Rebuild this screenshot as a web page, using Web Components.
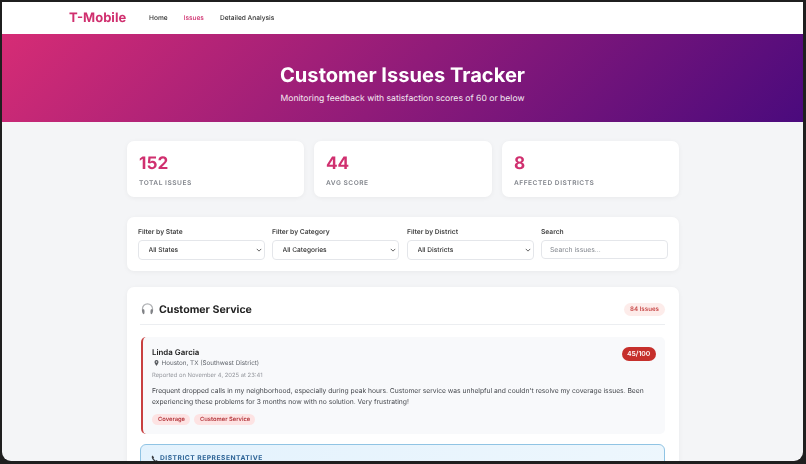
<!DOCTYPE html>
<html lang="en">
<head>
<meta charset="utf-8">
<title>Customer Issues Tracker</title>
<style>
    html, body { margin: 0; height: 100%; overflow: hidden; background: #1f1f1f; }
    body { font-family: Inter, "Liberation Sans", sans-serif; text-rendering: geometricPrecision; }
</style>
</head>
<body>
<app-window>
    <top-nav></top-nav>
    <hero-banner heading="Customer Issues Tracker" sub="Monitoring feedback with satisfaction scores of 60 or below"></hero-banner>
    <page-main>
        <stat-row>
            <stat-card value="152" label="Total Issues"></stat-card>
            <stat-card value="44" label="Avg Score"></stat-card>
            <stat-card value="8" label="Affected Districts"></stat-card>
        </stat-row>
        <filter-bar>
            <filter-field label="Filter by State" option="All States"></filter-field>
            <filter-field label="Filter by Category" option="All Categories"></filter-field>
            <filter-field label="Filter by District" option="All Districts"></filter-field>
            <filter-field label="Search" placeholder="Search issues..."></filter-field>
        </filter-bar>
        <issue-section heading="Customer Service" count="84 Issues">
            <issue-card name="Linda Garcia" place="Houston, TX (Southwest District)" date="Reported on November 4, 2025 at 23:41" score="45/100">
                Frequent dropped calls in my neighborhood, especially during peak hours. Customer service was unhelpful and couldn't resolve my coverage issues. Been experiencing these problems for 3 months now with no solution. Very frustrating!
                <tag-chip slot="tags">Coverage</tag-chip>
                <tag-chip slot="tags">Customer Service</tag-chip>
            </issue-card>
            <rep-panel heading="District Representative"></rep-panel>
        </issue-section>
    </page-main>
</app-window>

<script>
    function define(name, render) {
        customElements.define(name, class extends HTMLElement {
            connectedCallback() {
                this.attachShadow({ mode: 'open' });
                this.shadowRoot.innerHTML = render(this);
            }
        });
    }

    define('app-window', () => `
        <style>
            :host {
                display: block;
                box-sizing: border-box;
                height: 459px;
                margin: 2px 3px 0 2px;
                background: #f4f5f7;
                border-radius: 0 0 9px 9px;
                overflow: hidden;
                filter: blur(.35px);
            }
        </style>
        <slot></slot>
    `);

    define('top-nav', () => `
        <style>
            :host {
                display: flex;
                align-items: center;
                height: 32px;
                padding-left: 67px;
                background: #fff;
                font-size: 6.6px;
                font-weight: 500;
                color: #333;
            }
            .logo {
                width: 80px;
                color: #d0306f;
                font-size: 13px;
                font-weight: 700;
                will-change: transform;
            }
            nav { display: flex; gap: 16px; will-change: transform; }
            .active { color: #d0306f; }
        </style>
        <div class="logo">T-Mobile</div>
        <nav>
            <span>Home</span>
            <span class="active">Issues</span>
            <span>Detailed Analysis</span>
        </nav>
    `);

    define('hero-banner', (el) => `
        <style>
            :host {
                display: flex;
                flex-direction: column;
                align-items: center;
                justify-content: center;
                box-sizing: border-box;
                height: 88px;
                padding-top: 10px;
                background: linear-gradient(135deg, #d62c75 0%, #4a0a7d 100%);
                color: #fff;
                text-align: center;
            }
            h1 { margin: 0 0 5px; font-size: 20.1px; line-height: 26px; font-weight: 700; will-change: transform; }
            p { margin: 0; font-size: 8.6px; line-height: 12px; opacity: .9; }
        </style>
        <h1>${el.getAttribute('heading')}</h1>
        <p>${el.getAttribute('sub')}</p>
    `);

    define('page-main', () => `
        <style>
            :host {
                display: flex;
                flex-direction: column;
                width: 552px;
                margin-left: 125px;
                padding-top: 19px;
            }
        </style>
        <slot></slot>
    `);

    define('stat-row', () => `
        <style>
            :host {
                display: grid;
                grid-template-columns: repeat(3, 1fr);
                gap: 10px;
                margin-bottom: 20px;
            }
        </style>
        <slot></slot>
    `);

    define('stat-card', (el) => `
        <style>
            :host {
                display: block;
                box-sizing: border-box;
                height: 56px;
                padding: 12px 12px 0;
                background: #fff;
                border-radius: 7px;
                box-shadow: 0 1px 5px rgba(0, 0, 0, .05);
            }
            .value { color: #d0306f; font-size: 17.2px; line-height: 21px; font-weight: 700; will-change: transform; }
            .label {
                margin-top: 4px;
                color: #80848b;
                font-size: 6.6px;
                line-height: 10px;
                font-weight: 600;
                letter-spacing: .52px;
                text-transform: uppercase;
                will-change: transform;
            }
        </style>
        <div class="value">${el.getAttribute('value')}</div>
        <div class="label">${el.getAttribute('label')}</div>
    `);

    define('filter-bar', () => `
        <style>
            :host {
                display: grid;
                grid-template-columns: repeat(4, 1fr);
                gap: 7.67px;
                box-sizing: border-box;
                height: 54px;
                margin-bottom: 16px;
                padding: 11px;
                background: #fff;
                border-radius: 7px;
                box-shadow: 0 1px 5px rgba(0, 0, 0, .05);
            }
        </style>
        <slot></slot>
    `);

    define('filter-field', (el) => {
        const placeholder = el.getAttribute('placeholder');
        const control = placeholder
            ? `<input type="text" placeholder="${placeholder}">`
            : `<div class="wrap">
                    <select><option>${el.getAttribute('option')}</option></select>
                    <svg viewBox="0 0 8 5"><path d="M1 1l3 3 3-3" fill="none" stroke="#444" stroke-width="1.100"/></svg>
               </div>`;
        return `
            <style>
                :host { display: block; min-width: 0; }
                label {
                    display: block;
                    margin-bottom: 3px;
                    color: #444;
                    font-size: 6.7px;
                    line-height: 8.500px;
                    font-weight: 600;
                    will-change: transform;
                }
                .wrap { position: relative; }
                .wrap svg { position: absolute; right: 3px; top: 8px; width: 6px; height: 4px; pointer-events: none; }
                select, input {
                    display: block;
                    box-sizing: border-box;
                    width: 100%;
                    border: 1px solid #e4e6ea;
                    border-radius: 4px;
                    background: transparent;
                    font: 500 6.6px Inter, "Liberation Sans", sans-serif;
                    text-rendering: geometricPrecision;
                    color: #333;
                    outline: none;
                    will-change: transform;
                }
                select { height: 20px; padding: 0 9.500px; appearance: none; }
                input { height: 19px; padding: 0 8px; font-weight: 400; font-size: 6.8px; }
                input::placeholder { color: #84888f; }
            </style>
            <label>${el.getAttribute('label')}</label>
            ${control}
        `;
    });

    define('issue-section', (el) => `
        <style>
            :host {
                display: block;
                padding: 13px 14px 13px 13px;
                background: #fff;
                border-radius: 7px;
                box-shadow: 0 1px 5px rgba(0, 0, 0, .05);
            }
            header {
                display: flex;
                align-items: center;
                gap: 5px;
                height: 18px;
                margin-bottom: 12px;
                padding: 0 0 6px 1px;
                border-bottom: 1px solid #eceef1;
            }
            svg { width: 13px; height: 14px; flex: none; }
            h2 { flex: 1; margin: 0; color: #222; font-size: 10.6px; font-weight: 700; will-change: transform; }
            .count {
                padding: 0 6px;
                border-radius: 7px;
                background: #fdecea;
                color: #c84a4a;
                font-size: 6.2px;
                line-height: 13px;
                font-weight: 600;
            }
            .count span { display: block; will-change: transform; }
        </style>
        <header>
            <svg viewBox="0 0 14 14">
                <path d="M1.600 9V6.800a5.400 5.400 0 0 1 10.800 0V9" fill="none" stroke="#b0b2b5" stroke-width="1.300"/>
                <path d="M1 8.300c0-1 1.900-1.500 2.400-.8.600.9.600 4 0 4.900C2.700 13 1 11.400 1 8.300zM13 8.300c0-1-1.900-1.500-2.400-.8-.6.9-.6 4 0 4.900.7.600 2.400-1 2.400-4.100z" fill="#808286"/>
            </svg>
            <h2>${el.getAttribute('heading')}</h2>
            <div class="count"><span>${el.getAttribute('count')}</span></div>
        </header>
        <slot></slot>
    `);

    define('issue-card', (el) => `
        <style>
            :host {
                display: block;
                position: relative;
                box-sizing: border-box;
                height: 97px;
                margin: 0 0 10px 1px;
                padding: 10px 9px 0 9px;
                border-left: 2px solid #c84040;
                border-radius: 5px;
                background: #f8f9fb;
            }
            .name { color: #222; font-size: 7.9px; line-height: 10px; font-weight: 600; will-change: transform; }
            .place {
                display: flex;
                align-items: center;
                gap: 3px;
                height: 10px;
                margin-top: .5px;
                color: #63676e;
                font-size: 6.3px;
                will-change: transform;
            }
            .place svg { width: 5px; height: 6px; margin-left: 1.5px; margin-right: 0; }
            .date { margin-top: 4.500px; color: #94979d; font-size: 5.85px; line-height: 8px; will-change: transform; }
            .text { margin-top: 5.500px; color: #44474c; font-size: 6.72px; line-height: 10.500px; will-change: transform; }
            .tags { display: flex; gap: 4px; margin-top: 7px; }
            .score {
                position: absolute;
                top: 10px;
                right: 9px;
                padding: 0 5.500px;
                border-radius: 7px;
                background: #c6302c;
                color: #fff;
                font-size: 6.8px;
                line-height: 14px;
                font-weight: 600;
            }
            .score span { display: block; will-change: transform; }
        </style>
        <div class="name">${el.getAttribute('name')}</div>
        <div class="place">
            <svg viewBox="0 0 6 7"><path d="M3 0a2.400 2.400 0 0 0-2.400 2.400C.6 4 3 7 3 7s2.400-3 2.400-4.600A2.400 2.400 0 0 0 3 0zm0 3.300a.9.9 0 1 1 0-1.800.9.9 0 0 1 0 1.800z" fill="#55585d"/></svg>
            <span>${el.getAttribute('place')}</span>
        </div>
        <div class="date">${el.getAttribute('date')}</div>
        <div class="text"><slot></slot></div>
        <div class="tags"><slot name="tags"></slot></div>
        <div class="score"><span>${el.getAttribute('score')}</span></div>
    `);

    define('tag-chip', () => `
        <style>
            :host {
                display: inline-block;
                padding: 0 5.500px;
                border-radius: 6px;
                background: #fde3e3;
                color: #b3343a;
                font-size: 5.8px;
                line-height: 11px;
                font-weight: 600;
            }
            span { display: block; will-change: transform; }
        </style>
        <span><slot></slot></span>
    `);

    define('rep-panel', (el) => `
        <style>
            :host {
                display: block;
                box-sizing: border-box;
                height: 60px;
                padding: 9px 10px;
                border: 1px solid #90c4e4;
                border-radius: 6px;
                background: linear-gradient(135deg, #e3f2fd, #eef7fd);
            }
            div {
                display: flex;
                align-items: center;
                gap: 1px;
                color: #2e6496;
                font-size: 6.7px;
                line-height: 9px;
                font-weight: 700;
                letter-spacing: .5px;
                text-transform: uppercase;
                will-change: transform;
            }
            svg { width: 8px; height: 8px; flex: none; }
        </style>
        <div>
            <svg viewBox="0 0 8 8"><path d="M1.600.6C.7 1 .5 2 1 3.200c.8 1.800 2 3.100 3.800 3.900 1 .4 1.900.2 2.400-.6L5.700 5.100l-1 .6C3.700 5.100 2.900 4.300 2.400 3.300l.7-.9z" fill="#3a3d42"/></svg>
            <span>${el.getAttribute('heading')}</span>
        </div>
    `);
</script>
</body>
</html>
